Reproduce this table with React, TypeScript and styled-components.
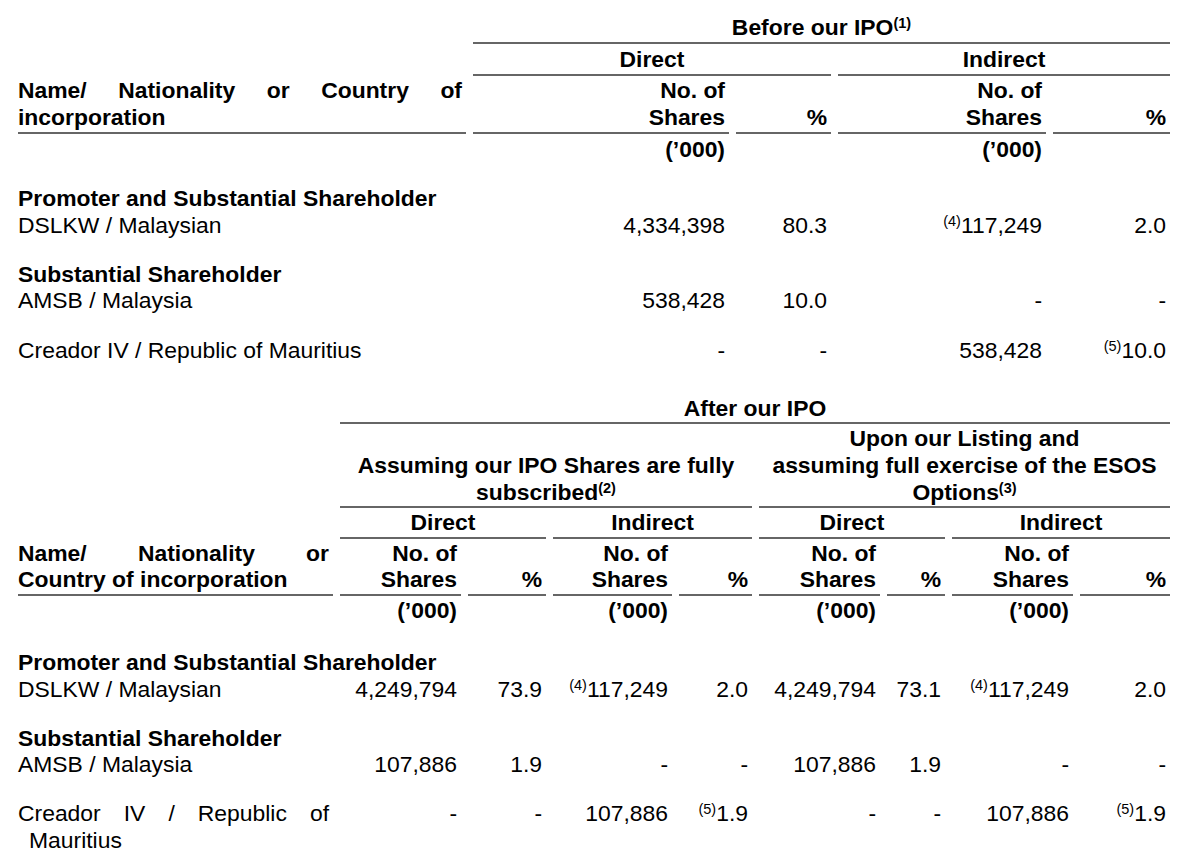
import React from "react";
import styled, { createGlobalStyle } from "styled-components";

const GlobalStyle = createGlobalStyle`
  html, body { margin: 0; padding: 0; background: #ffffff; }
  body {
    font-family: "Liberation Sans", Arial, Helvetica, sans-serif;
    color: #000;
    font-size: 22.9px;
    line-height: 26.6px;
  }
`;

const Page = styled.main`
  width: 1152px;
  padding: 12.7px 0 0 18px;
  display: flex;
  flex-direction: column;
  gap: 30.6px;
`;

const Table = styled.section`
  display: flex;
  flex-direction: column;
`;

const HeaderGrid = styled.div<{ $cols: string; $pad: number }>`
  display: grid;
  grid-template-columns: ${(p) => p.$cols};
  column-gap: 7px;
  --cell-pad: ${(p) => p.$pad}px;
`;

type Align = "left" | "center" | "right" | "justify";

const HeadCell = styled.div<{
  $col: string;
  $row: string;
  $align: Align;
  $rule?: boolean;
}>`
  grid-column: ${(p) => p.$col};
  grid-row: ${(p) => p.$row};
  display: flex;
  flex-direction: column;
  justify-content: flex-end;
  padding: var(--cell-pad) ${(p) => (p.$align === "center" ? "0" : "4px")} var(--cell-pad) 0;
  border-bottom: 2px solid ${(p) => (p.$rule === false ? "transparent" : "#666")};
  font-weight: bold;
  text-align: ${(p) => p.$align};
`;

const Group = styled.div<{ $space: number }>`
  margin-top: ${(p) => p.$space}px;
  display: flex;
  flex-direction: column;
`;

const Category = styled.div`
  font-weight: bold;
`;

const DataRow = styled.div<{ $cols: string }>`
  display: grid;
  grid-template-columns: ${(p) => p.$cols};
  column-gap: 7px;
`;

const NameCell = styled.div`
  padding-right: 4px;
  text-align: justify;
`;

const NumCell = styled.div`
  padding-right: 4px;
  text-align: right;
  white-space: nowrap;
`;

const Sup = styled.sup`
  font-size: 14.5px;
  line-height: 0;
  vertical-align: 7px;
  font-weight: inherit;
`;

const Wrapped = styled.span`
  display: inline-block;
  margin-left: 11px;
`;

type Row = { name: React.ReactNode; values: React.ReactNode[] };
type Section = { category?: string; rows: Row[] };

const COLS1 = "448px 256px 95px 208px 117px";
const COLS2 = "315px 121px 78px 119px 73px 121px 58px 121px 90px";

const sections1: Section[] = [
  {
    category: "Promoter and Substantial Shareholder",
    rows: [
      {
        name: "DSLKW / Malaysian",
        values: ["4,334,398", "80.3", <><Sup>(4)</Sup>117,249</>, "2.0"],
      },
    ],
  },
  {
    category: "Substantial Shareholder",
    rows: [{ name: "AMSB / Malaysia", values: ["538,428", "10.0", "-", "-"] }],
  },
  {
    rows: [
      {
        name: "Creador IV / Republic of Mauritius",
        values: ["-", "-", "538,428", <><Sup>(5)</Sup>10.0</>],
      },
    ],
  },
];

const sections2: Section[] = [
  {
    category: "Promoter and Substantial Shareholder",
    rows: [
      {
        name: "DSLKW / Malaysian",
        values: [
          "4,249,794",
          "73.9",
          <><Sup>(4)</Sup>117,249</>,
          "2.0",
          "4,249,794",
          "73.1",
          <><Sup>(4)</Sup>117,249</>,
          "2.0",
        ],
      },
    ],
  },
  {
    category: "Substantial Shareholder",
    rows: [
      {
        name: "AMSB / Malaysia",
        values: ["107,886", "1.9", "-", "-", "107,886", "1.9", "-", "-"],
      },
    ],
  },
  {
    rows: [
      {
        name: (
          <>
            Creador IV / Republic of <Wrapped>Mauritius</Wrapped>
          </>
        ),
        values: [
          "-",
          "-",
          "107,886",
          <><Sup>(5)</Sup>1.9</>,
          "-",
          "-",
          "107,886",
          <><Sup>(5)</Sup>1.9</>,
        ],
      },
    ],
  },
];

const Body: React.FC<{ cols: string; sections: Section[]; firstSpace: number; space: number }> = ({
  cols,
  sections,
  firstSpace,
  space,
}) => (
  <>
    {sections.map((s, i) => (
      <Group key={i} $space={i === 0 ? firstSpace : space}>
        {s.category && <Category>{s.category}</Category>}
        {s.rows.map((r, j) => (
          <DataRow key={j} $cols={cols}>
            <NameCell>{r.name}</NameCell>
            {r.values.map((v, k) => (
              <NumCell key={k}>{v}</NumCell>
            ))}
          </DataRow>
        ))}
      </Group>
    ))}
  </>
);

const SharesHead = () => (
  <span>
    No. of
    <br />
    Shares
  </span>
);

export default function App() {
  return (
    <>
      <GlobalStyle />
      <Page>
        <Table>
          <HeaderGrid $cols={COLS1} $pad={1.5}>
            <HeadCell $col="1" $row="1 / 4" $align="justify">
              Name/ Nationality or Country of incorporation
            </HeadCell>
            <HeadCell $col="2 / 6" $row="1" $align="center">
              <span>
                Before our IPO<Sup>(1)</Sup>
              </span>
            </HeadCell>
            <HeadCell $col="2 / 4" $row="2" $align="center">Direct</HeadCell>
            <HeadCell $col="4 / 6" $row="2" $align="center">Indirect</HeadCell>
            <HeadCell $col="2" $row="3" $align="right"><SharesHead /></HeadCell>
            <HeadCell $col="3" $row="3" $align="right">%</HeadCell>
            <HeadCell $col="4" $row="3" $align="right"><SharesHead /></HeadCell>
            <HeadCell $col="5" $row="3" $align="right">%</HeadCell>
            <HeadCell $col="2" $row="4" $align="right" $rule={false}>(’000)</HeadCell>
            <HeadCell $col="4" $row="4" $align="right" $rule={false}>(’000)</HeadCell>
          </HeaderGrid>
          <Body cols={COLS1} sections={sections1} firstSpace={19.5} space={22.5} />
        </Table>

        <Table>
          <HeaderGrid $cols={COLS2} $pad={1}>
            <HeadCell $col="1" $row="1 / 5" $align="justify">
              Name/ Nationality or Country of incorporation
            </HeadCell>
            <HeadCell $col="2 / 10" $row="1" $align="center">After our IPO</HeadCell>
            <HeadCell $col="2 / 6" $row="2" $align="center">
              <span>
                Assuming our IPO Shares are fully subscribed<Sup>(2)</Sup>
              </span>
            </HeadCell>
            <HeadCell $col="6 / 10" $row="2" $align="center">
              <span>
                Upon our Listing and
                <br />
                assuming full exercise of the ESOS Options<Sup>(3)</Sup>
              </span>
            </HeadCell>
            <HeadCell $col="2 / 4" $row="3" $align="center">Direct</HeadCell>
            <HeadCell $col="4 / 6" $row="3" $align="center">Indirect</HeadCell>
            <HeadCell $col="6 / 8" $row="3" $align="center">Direct</HeadCell>
            <HeadCell $col="8 / 10" $row="3" $align="center">Indirect</HeadCell>
            <HeadCell $col="2" $row="4" $align="right"><SharesHead /></HeadCell>
            <HeadCell $col="3" $row="4" $align="right">%</HeadCell>
            <HeadCell $col="4" $row="4" $align="right"><SharesHead /></HeadCell>
            <HeadCell $col="5" $row="4" $align="right">%</HeadCell>
            <HeadCell $col="6" $row="4" $align="right"><SharesHead /></HeadCell>
            <HeadCell $col="7" $row="4" $align="right">%</HeadCell>
            <HeadCell $col="8" $row="4" $align="right"><SharesHead /></HeadCell>
            <HeadCell $col="9" $row="4" $align="right">%</HeadCell>
            <HeadCell $col="2" $row="5" $align="right" $rule={false}>(’000)</HeadCell>
            <HeadCell $col="4" $row="5" $align="right" $rule={false}>(’000)</HeadCell>
            <HeadCell $col="6" $row="5" $align="right" $rule={false}>(’000)</HeadCell>
            <HeadCell $col="8" $row="5" $align="right" $rule={false}>(’000)</HeadCell>
          </HeaderGrid>
          <Body cols={COLS2} sections={sections2} firstSpace={22.5} space={22.5} />
        </Table>
      </Page>
    </>
  );
}
